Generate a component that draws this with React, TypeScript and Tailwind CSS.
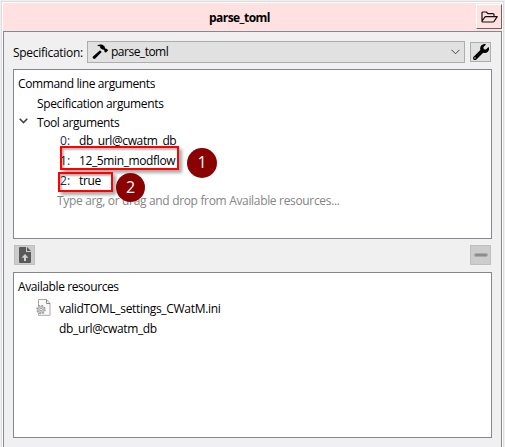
import React from "react";

const rows = "whitespace-pre text-[12px] leading-[20px]";

function Hammer() {
  return (
    <svg width="17" height="16" viewBox="0 0 17 16" fill="#000">
      <path d="M1 12.6 8 6.2l1.7 1.7-6.4 6.7c-.6.6-1.4.6-2 0-.7-.6-.9-1.4-.3-2Z" />
      <path d="M5 1.6C7.4.3 10.2.2 12 1.9l.9.9-.1 1.1.9.9 1-.1 1.5 1.5-2.5 2.6-1.5-1.5.1-1-1-.9-1 .1-2.1-1.6V2.6Z" />
    </svg>
  );
}

function Wrench() {
  return (
    <svg width="16" height="16" viewBox="0 0 512 512" fill="#000">
      <path d="M508 109c-2-9-14-12-20-5l-74 74-68-11-11-68 74-75c7-6 4-18-5-20-47-12-99 1-136 37-39 39-49 97-32 148L19 407c-25 25-25 66 0 91s66 25 91 0l216-216c51 19 109 9 149-31 36-37 49-94 33-142ZM64 472a24 24 0 1 1 0-48 24 24 0 0 1 0 48Z" />
    </svg>
  );
}

function FolderOpen() {
  return (
    <svg width="17" height="12" viewBox="0 0 17 12" fill="none" stroke="#160e0e" strokeWidth="1.2" strokeLinejoin="round">
      <path d="M1 10V2Q1 1 2 1h3.3l1.6 1.6H12q1 0 1 1v1.8M1 10l3.3-4.4h11.9L13 10.5Q12.7 11 12 11H2Q1 11 1 10Z" />
    </svg>
  );
}

function UploadFile() {
  return (
    <svg width="12" height="16" viewBox="0 0 12 16" fill="#595959">
      <path d="M1 0h6v5h5v10q0 1-1 1H1q-1 0-1-1V1q0-1 1-1Z" />
      <path d="M8 0v4h4Z" />
      <path d="M6 7 9.5 10.7H7V14H5v-3.3H2.5Z" fill="#d0d0d0" />
    </svg>
  );
}

function SettingsFile() {
  return (
    <svg width="15" height="17" viewBox="0 0 15 17" fill="none">
      <path d="M2.5.5h8l3.5 4v11.8H2.5Z" fill="#fafafa" stroke="#aaa" />
      <path d="M10.5.5v4H14" stroke="#888" />
      <circle cx="5" cy="10.5" r="4" fill="#e2e2e2" stroke="#999" strokeWidth="1.5" strokeDasharray="1.7 1.44" />
      <circle cx="5" cy="10.5" r="3" fill="#ddd" stroke="#999" strokeWidth=".7" />
      <circle cx="5" cy="10.5" r="1.3" fill="#fff" stroke="#888" strokeWidth=".8" />
    </svg>
  );
}

function Argument({ index, value }: { index: string; value: string }) {
  return (
    <div className="flex h-5 pl-[46px]">
      <span className="w-[19px] text-[#1b2b50]">{index}:</span>
      <span className="tracking-[-0.38px]">{value}</span>
    </div>
  );
}

export default function App() {
  return (
    <div className="relative h-[447px] w-[505px] overflow-hidden bg-[#f0f0f0] pl-px pt-px font-['Open_Sans','Noto_Sans',sans-serif] text-black">
      <div className="h-[446px] w-[503px] border-x border-t border-[#dcdcdc] bg-white pl-px pt-px">
        <header className="flex h-7 w-[499px] bg-[#ffe1e1]">
          <h1 className="w-[473px] pl-[206px] text-[12px] font-bold leading-[29px] tracking-[-0.55px]">parse_toml</h1>
          <button className="mt-px flex h-[25px] w-[26px] items-center justify-center border-b border-r border-l border-t border-b-[#6d6060] border-l-white border-r-[#6d6060] border-t-white">
            <FolderOpen />
          </button>
        </header>
        <main className="h-[416px] w-[499px] border-x border-t border-[#828790] bg-[#f0f0f0] pl-[9px] pt-[9px]">
          <div className="flex h-[22px] w-[478px]">
            <span className="w-[74px] text-[12px] leading-[23px] tracking-[-0.29px]">Specification:</span>
            <div className="flex h-[22px] w-[378px] items-center border border-[#adadad] bg-[#e1e1e1] pl-1 pr-[4px]">
              <Hammer />
              <span className="ml-[2px] flex-1 text-[12px] leading-5 tracking-[-0.5px]">parse_toml</span>
              <svg width="9" height="6" viewBox="0 0 9 6" fill="none" stroke="#444"><path d="m.5.8 4 4 4-4" /></svg>
            </div>
            <button className="ml-[5px] mt-px flex h-5 w-[21px] items-center justify-center border border-[#adadad] bg-[#e1e1e1]"><Wrench /></button>
          </div>
          <section className={`mt-[6px] h-[170px] w-[479px] border border-[#828790] bg-white pt-[4px] ${rows}`}>
            <div className="h-5 pl-1 tracking-[-0.38px]">Command line arguments</div>
            <div className="h-5 pl-[23px] tracking-[-0.35px]">Specification arguments</div>
            <div className="flex h-[17px] items-center pl-[5px] leading-[17px]">
              <svg className="-mt-[3px] mr-[9px]" width="9" height="6" viewBox="0 0 9 6" fill="none" stroke="#444" strokeWidth="1.6"><path d="m.7.8 3.8 3.8L8.3.8" /></svg>
              <span className="tracking-[-0.4px]">Tool arguments</span>
            </div>
            <Argument index="0" value="db_url@cwatm_db" />
            <Argument index="1" value="12_5min_modflow" />
            <Argument index="2" value="true" />
            <div className="h-5 pl-[43px] tracking-[-0.33px] text-[#858585]">Type arg, or drag and drop from Available resources...</div>
          </section>
          <div className="flex h-[33px] w-[478px] items-start justify-between pl-px pt-[6px]">
            <button className="flex h-5 w-[21px] items-center justify-center border border-[#bfbfbf] bg-[#ccc]"><UploadFile /></button>
            <button className="flex h-5 w-[21px] items-center justify-center border border-[#bfbfbf] bg-[#ccc]"><span className="h-[4px] w-[14px] rounded-sm border border-[#aaa] bg-[#8c8c8c]" /></button>
          </div>
          <section className={`h-[166px] w-[479px] border border-[#828790] bg-white pt-[4px] ${rows}`}>
            <div className="h-[21px] pl-1 tracking-[-0.4px]">Available resources</div>
            <div className="flex h-[21px] items-center pl-[22px]">
              <span className="-mt-[2px]"><SettingsFile /></span>
              <span className="ml-2 tracking-[-0.31px]">validTOML_settings_CWatM.ini</span>
            </div>
            <div className="h-5 pl-[45px] tracking-[-0.35px]">db_url@cwatm_db</div>
          </section>
        </main>
      </div>
      <div className="absolute left-[60px] top-[146px] h-[24px] w-[119px] border-2 border-[#f00] shadow-[3px_3px_3px_#0005,inset_2px_2px_2px_#0004]" />
      <div className="absolute left-[58px] top-[172px] h-[20px] w-[55px] border-2 border-[#f00] shadow-[3px_3px_3px_#0005,inset_2px_2px_2px_#0004]" />
      <div className="absolute left-[187px] top-[148px] h-[30px] w-[30px] rounded-full bg-[#8b0000] text-center text-[16px] leading-[29px] text-white">1</div>
      <div className="absolute left-[116px] top-[173px] h-[29px] w-[29px] rounded-full bg-[#8b0000] text-center text-[16px] leading-[29px] text-white">2</div>
    </div>
  );
}
